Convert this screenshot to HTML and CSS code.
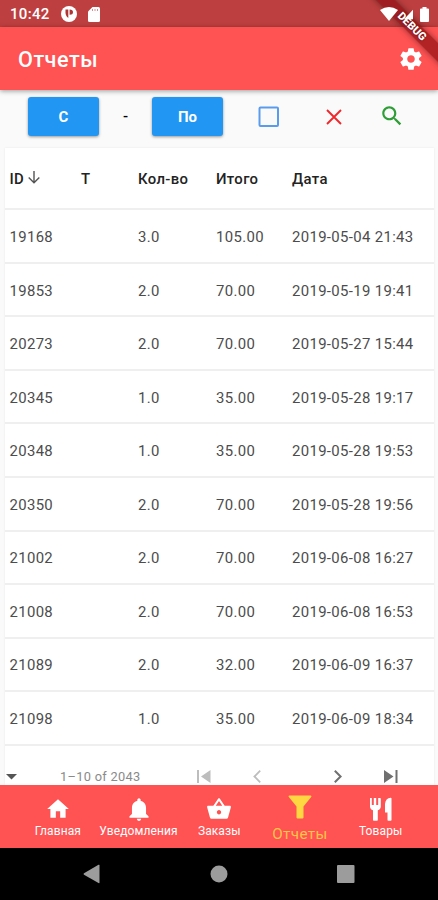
FILE: index.html
```html
<!DOCTYPE html>
<html lang="ru">
<head>
    <meta charset="UTF-8">
    <meta name="viewport" content="width=device-width, initial-scale=1.0">
    <title>Отчеты</title>
    <link rel="stylesheet" href="styles.css">
</head>
<body>

    <!-- Status bar -->
    <div class="status-bar">
        <span class="clock">10:42</span>
        <svg class="status-app" width="16" height="16" viewBox="0 0 16 16"><circle cx="8" cy="8" r="8" fill="#fff"/><path d="M4.500 3.600h2.800v8.400Q4 10.500 4.500 3.600zM8.600 3.600q3.400 0 3.400 2.600t-3.400 2.500z" fill="#b03434"/></svg>
        <svg class="status-card" width="12" height="15" viewBox="0 0 12 15"><path d="M4.500 0H10.500Q12 0 12 1.500V13.500Q12 15 10.500 15H1.500Q0 15 0 13.500V4.500z" fill="#fff"/><path d="M4.500 2v2M7 2v2M9.500 2v2" stroke="#d98b8b" stroke-width="1"/></svg>
        <svg class="status-wifi" width="18" height="14" viewBox="0 0 18 14"><path d="M0 3Q9-3 18 3L9 14z" fill="#fff"/></svg>
        <svg class="status-signal" width="13" height="14" viewBox="0 0 13 14"><path d="M13 0V14H0z" fill="#fff"/></svg>
        <svg class="status-battery" width="9" height="15" viewBox="0 0 9 15"><path d="M2.500 0h4v1.500H8q1 0 1 1V14q0 1-1 1H1q-1 0-1-1V2.500q0-1 1-1h1.500z" fill="#fff"/></svg>
    </div>
    <div class="debug-corner"><span class="debug-banner">DEBUG</span></div>

    <!-- App bar -->
    <header class="app-bar">
        <h1>Отчеты</h1>
        <svg width="26" height="26" viewBox="0 0 24 24" fill="#fff"><path d="M19.430 12.980c.04-.32.07-.64.07-.98s-.03-.66-.07-.98l2.110-1.650c.19-.15.24-.42.12-.64l-2-3.460c-.12-.22-.39-.3-.61-.22l-2.490 1c-.52-.4-1.080-.73-1.690-.98l-.38-2.650C14.460 2.180 14.250 2 14 2h-4c-.25 0-.46.18-.49.42l-.38 2.650c-.61.25-1.170.59-1.690.98l-2.490-1c-.23-.09-.49 0-.61.22l-2 3.460c-.13.22-.07.49.12.64l2.110 1.650c-.04.32-.07.65-.07.98s.03.66.07.98l-2.110 1.650c-.19.15-.24.42-.12.64l2 3.460c.12.22.39.3.61.22l2.490-1c.52.4 1.080.73 1.690.98l.38 2.650c.03.24.24.42.49.42h4c.25 0 .46-.18.49-.42l.38-2.650c.61-.25 1.170-.59 1.690-.98l2.490 1c.23.09.49 0 .61-.22l2-3.460c.12-.22.07-.49-.12-.64l-2.110-1.650zM12 15.500c-1.930 0-3.500-1.570-3.500-3.500s1.570-3.500 3.500-3.500 3.500 1.570 3.500 3.500-1.570 3.500-3.500 3.500z"/></svg>
    </header>

    <!-- Period filter -->
    <div class="filter-row">
        <button class="btn">С</button>
        <span class="dash">-</span>
        <button class="btn">По</button>
        <svg class="icon-check" width="22" height="22" viewBox="0 0 22 22"><rect x="1.500" y="1.500" width="18.500" height="18.500" rx="1" fill="none" stroke="#5a9bec" stroke-width="2"/></svg>
        <svg class="icon-clear" width="16" height="16" viewBox="0 0 16 16"><path d="M1 1L15 15M15 1L1 15" stroke="#f0262b" stroke-width="1.900"/></svg>
        <svg class="icon-search" width="26" height="26" viewBox="0 0 24 24" fill="#2e9e36"><path d="M15.500 14h-.79l-.28-.27C15.410 12.590 16 11.110 16 9.500 16 5.910 13.090 3 9.500 3S3 5.910 3 9.500 5.910 16 9.500 16c1.610 0 3.090-.59 4.230-1.570l.27.28v.79l5 4.990L20.490 19l-4.990-5zm-6 0C7.010 14 5 11.990 5 9.500S7.010 5 9.500 5 14 7.010 14 9.500 11.990 14 9.500 14z"/></svg>
    </div>

    <!-- Report table -->
    <main class="card">
        <div class="table-row table-head">
            <span>ID <svg width="12" height="13" viewBox="0 0 12 13"><path d="M6 0V11.500M.7 6.500L6 11.800L11.300 6.500" fill="none" stroke="#555" stroke-width="1.400"/></svg></span>
            <span>Т</span><span>Кол-во</span><span>Итого</span><span>Дата</span>
        </div>
        <div class="table-row"><span>19168</span><span></span><span>3.0</span><span>105.00</span><span>2019-05-04 21:43</span></div>
        <div class="table-row"><span>19853</span><span></span><span>2.0</span><span>70.00</span><span>2019-05-19 19:41</span></div>
        <div class="table-row"><span>20273</span><span></span><span>2.0</span><span>70.00</span><span>2019-05-27 15:44</span></div>
        <div class="table-row"><span>20345</span><span></span><span>1.0</span><span>35.00</span><span>2019-05-28 19:17</span></div>
        <div class="table-row"><span>20348</span><span></span><span>1.0</span><span>35.00</span><span>2019-05-28 19:53</span></div>
        <div class="table-row"><span>20350</span><span></span><span>2.0</span><span>70.00</span><span>2019-05-28 19:56</span></div>
        <div class="table-row"><span>21002</span><span></span><span>2.0</span><span>70.00</span><span>2019-06-08 16:27</span></div>
        <div class="table-row"><span>21008</span><span></span><span>2.0</span><span>70.00</span><span>2019-06-08 16:53</span></div>
        <div class="table-row"><span>21089</span><span></span><span>2.0</span><span>32.00</span><span>2019-06-09 16:37</span></div>
        <div class="table-row"><span>21098</span><span></span><span>1.0</span><span>35.00</span><span>2019-06-09 18:34</span></div>
        <div class="pager">
            <svg class="pager-drop" width="11" height="6" viewBox="0 0 11 6"><path d="M0 0H11L5.500 5.500z" fill="#555"/></svg>
            <span class="pager-range">1–10 of 2043</span>
            <svg class="pager-first" width="14" height="13" viewBox="0 0 14 13"><path d="M0 0H2V13H0zM13.500 0V13L4 6.500z" fill="#bdbdbd"/></svg>
            <svg class="pager-prev" width="8" height="13" viewBox="0 0 8 13"><path d="M7.200.7L1.400 6.500L7.200 12.300" fill="none" stroke="#bdbdbd" stroke-width="1.800"/></svg>
            <svg class="pager-next" width="8" height="13" viewBox="0 0 8 13"><path d="M.8.7L6.600 6.500L.8 12.300" fill="none" stroke="#707070" stroke-width="2"/></svg>
            <svg class="pager-last" width="14" height="13" viewBox="0 0 14 13"><path d="M0 0V13L9.500 6.500zM11.500 0H13.500V13H11.500z" fill="#707070"/></svg>
        </div>
    </main>

    <!-- Bottom navigation -->
    <nav class="bottom-nav">
        <div class="nav-item">
            <svg width="26" height="26" viewBox="0 0 24 24" fill="#fff"><path d="M10 20v-6h4v6h5v-8h3L12 3 2 12h3v8z"/></svg>
            <span>Главная</span>
        </div>
        <div class="nav-item">
            <svg width="26" height="26" viewBox="0 0 24 24" fill="#fff"><path d="M12 23c1.100 0 2-.9 2-2h-4c0 1.100.89 2 2 2zm6.500-6.500v-5.500c0-3.300-1.900-5.900-5-6.600V3.500c0-.83-.67-1.500-1.500-1.500s-1.500.67-1.500 1.500v.9C7.400 5.100 5.500 7.700 5.500 11v5.500l-2.300 2.200V20h17.600v-1.300z"/></svg>
            <span>Уведомления</span>
        </div>
        <div class="nav-item">
            <svg width="26" height="26" viewBox="0 0 24 24" fill="#fff"><path d="M17.210 9l-4.380-6.560c-.19-.28-.51-.42-.83-.42-.32 0-.64.14-.83.43L6.790 9H2c-.55 0-1 .45-1 1 0 .09.010.18.040.27l2.540 9.270c.23.84 1 1.460 1.920 1.460h13c.92 0 1.690-.62 1.930-1.460l2.540-9.270L23 10c0-.55-.45-1-1-1h-4.790zM9 9l3-4.400L15 9H9zm3 8c-1.100 0-2-.9-2-2s.9-2 2-2 2 .9 2 2-.9 2-2 2z"/></svg>
            <span>Заказы</span>
        </div>
        <div class="nav-item active">
            <svg width="24" height="24" viewBox="0 0 24 24" fill="#ffd740"><path d="M1.200.5H22.800Q24 .8 23.200 2L15.500 11.500V22.500Q15.400 23.500 14.500 23.500H9.500Q8.600 23.500 8.500 22.500V11.500L.8 2Q0 .8 1.200.5z"/></svg>
            <span>Отчеты</span>
        </div>
        <div class="nav-item">
            <svg width="26" height="26" viewBox="0 0 26 26" fill="#fff"><path d="M2 2h1.800v7h2V2h2.400v7h2V2H12q.8 0 .8.800V10.500q0 2.800-3 3.800V24q0 .8-.8.800H5.800q-.8 0-.8-.8V14.300Q2 13.300 2 10.500zM23.500 2.500V24q0 .8-.8.800H20.300q-.8 0-.8-.8V16.500H17V8Q17.500 2.200 22.700 1.700q.8 0 .8.800z"/></svg>
            <span>Товары</span>
        </div>
    </nav>

    <!-- System buttons -->
    <footer class="system-bar">
        <svg width="18" height="20" viewBox="0 0 18 20"><path d="M16.500 1V18.500Q16.500 19.500 15.500 19L1 10.800Q0 10 1 9.200L15.500.8Q16.500.4 16.500 1z" fill="#9c9c9c"/></svg>
        <svg width="18" height="18" viewBox="0 0 18 18"><circle cx="9" cy="9" r="8.500" fill="#9c9c9c"/></svg>
        <svg width="18" height="18" viewBox="0 0 18 18"><rect width="17.500" height="18" rx="1" fill="#9c9c9c"/></svg>
    </footer>

</body>
</html>
```
FILE: styles.css
```css
body {
    font-family: Roboto, sans-serif;
    background-color: #fafafa;
    width: 438px;
    height: 900px;
    margin: 0;
    display: flex;
    flex-direction: column;
    overflow: hidden;
    position: relative;
}

svg {
    display: block;
    flex: none;
}

.status-bar {
    flex: none;
    height: 27px;
    box-sizing: border-box;
    padding: 1px 9px 0 10px;
    display: flex;
    align-items: center;
    background-color: #be3f3f;
    color: white;
}

.clock {
    width: 51px;
    font-size: 15px;
    font-weight: 500;
    letter-spacing: 0.3px;
}

.status-card {
    margin-left: 11px;
}

/* status icons stay bright over the ribbon */
.status-wifi, .status-signal, .status-battery {
    z-index: 4;
}

.status-wifi {
    margin-left: auto;
}

.status-signal {
    margin-left: 6px;
    width: 9px;
    height: 13px;
}

.status-battery {
    margin-left: 7px;
}

/* ribbon lies over the status bar and app bar */
.debug-corner {
    position: absolute;
    top: 0;
    right: 0;
    width: 80px;
    height: 80px;
    overflow: hidden;
    z-index: 3;
}

.debug-banner {
    position: absolute;
    top: 20px;
    left: -16px;
    width: 140px;
    height: 13px;
    line-height: 13px;
    text-align: center;
    font-size: 11px;
    font-weight: 900;
    color: white;
    text-shadow: 0 0 2px rgba(80, 0, 0, 0.9);
    background-color: rgba(145, 15, 20, 0.7);
    box-shadow: 0 0 6px rgba(0, 0, 0, 0.45);
    transform: rotate(45deg);
}

.app-bar {
    flex: none;
    height: 63px;
    box-sizing: border-box;
    padding: 0 14px 0 18px;
    display: flex;
    align-items: center;
    justify-content: space-between;
    background-color: #ff5252;
    box-shadow: 0 1px 5px rgba(0, 0, 0, 0.4);
    z-index: 1;
}

    .app-bar h1 {
        margin: 2px 0 0;
        color: white;
        font-size: 21.6px;
        font-weight: 500;
        letter-spacing: 0.5px;
    }

.filter-row {
    flex: none;
    height: 58px;
    box-sizing: border-box;
    padding: 7px 0 0 28px;
    display: flex;
    align-items: flex-start;
}

.btn {
    width: 71px;
    height: 39px;
    padding: 0;
    background-color: #2196f3;
    color: white;
    border: none;
    border-radius: 3px;
    box-shadow: 0 1px 3px rgba(0, 0, 0, 0.4);
    font-family: inherit;
    font-size: 15px;
    font-weight: 700;
}

.dash {
    width: 53px;
    line-height: 39px;
    text-align: center;
    font-size: 15px;
    font-weight: 500;
}

.icon-check {
    margin: 9px 0 0 35px;
}

.icon-clear {
    margin: 12px 0 0 46px;
}

.icon-search {
    margin: 6px 0 0 37px;
}

.card {
    flex: 1;
    min-height: 0;
    margin: 0 4px 0 5px;
    overflow: hidden;
    background-color: white;
    box-shadow: 0 0 2px rgba(0, 0, 0, 0.08);
}

.table-row {
    height: 53.55px;
    box-sizing: border-box;
    padding: 2px 0 0 4.5px;
    border-bottom: 2px solid #efefef;
    display: grid;
    grid-template-columns: 71.5px 57px 78px 76px 1fr;
    align-items: center;
    color: #4c4c4c;
    font-size: 14.9px;
    letter-spacing: 0.35px;
    white-space: nowrap;
}

.table-head {
    height: 62.3px;
    color: #222;
    font-weight: 500;
}

    .table-head svg {
        display: inline-block;
    }

.pager {
    height: 62px;
    padding-left: 1px;
    display: flex;
    align-items: center;
    color: #8a8a8a;
}

.pager-range {
    width: 82px;
    margin: 0 0 0 43px;
    font-size: 12.8px;
    letter-spacing: 0.3px;
    white-space: nowrap;
}

.pager-first {
    margin-left: 55px;
}

.pager-prev {
    margin-left: 42px;
}

.pager-next {
    margin-left: 73px;
}

.pager-last {
    margin-left: 42px;
}

.bottom-nav {
    flex: none;
    height: 63px;
    box-sizing: border-box;
    padding: 0 17px 0 17.5px;
    display: flex;
    background-color: #ff5252;
    z-index: 1;
}

.nav-item {
    flex: 1 1 0;
    min-width: 0;
    padding-top: 11px;
    display: flex;
    flex-direction: column;
    align-items: center;
    color: white;
    font-size: 12px;
    line-height: 18px;
    letter-spacing: 0.1px;
    white-space: nowrap;
}

.nav-item.active {
    padding-top: 10px;
    color: #ffc545;
    font-size: 15.200px;
    line-height: 30px;
    letter-spacing: 0.4px;
}

.system-bar {
    flex: none;
    height: 52px;
    padding: 0 83px;
    box-sizing: border-box;
    display: flex;
    align-items: center;
    justify-content: space-between;
    background-color: black;
}
```
